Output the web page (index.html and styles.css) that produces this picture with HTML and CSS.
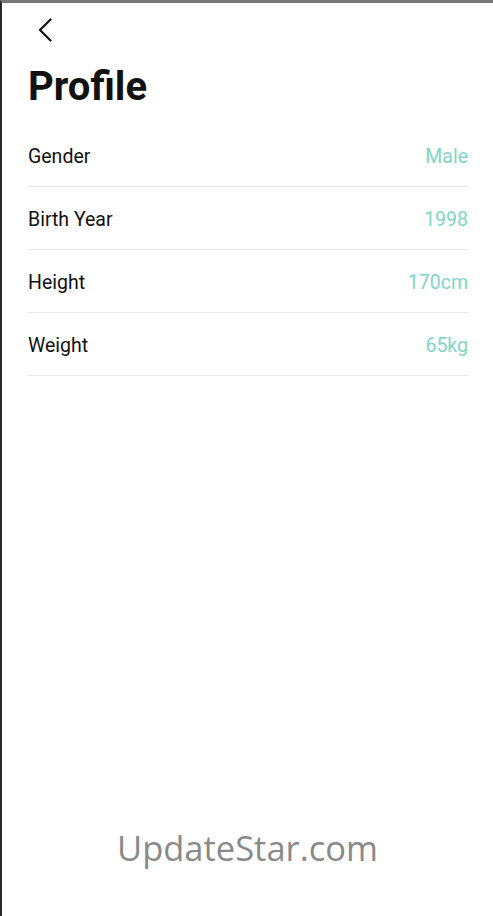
FILE: index.html
```html
<!DOCTYPE html>
<html lang="en">
<head>
    <meta charset="UTF-8">
    <meta name="viewport" content="width=device-width, initial-scale=1.0">
    <title>Profile</title>
    <link rel="stylesheet" href="styles.css">
</head>
<body>
    <div class="screen">
        <header class="top-bar">
            <button class="back-btn" aria-label="Back">
                <svg width="14" height="24" viewBox="0 0 14 24">
                    <path d="M12.5 1.5 L2 12 L12.5 22.5" fill="none" stroke="#111" stroke-width="2.2" stroke-linecap="round" stroke-linejoin="round"/>
                </svg>
            </button>
        </header>

        <h1 class="title">Profile</h1>

        <ul class="info-list">
            <li class="info-row">
                <span class="label">Gender</span>
                <span class="value">Male</span>
            </li>
            <li class="info-row">
                <span class="label">Birth Year</span>
                <span class="value">1998</span>
            </li>
            <li class="info-row">
                <span class="label">Height</span>
                <span class="value">170cm</span>
            </li>
            <li class="info-row">
                <span class="label">Weight</span>
                <span class="value">65kg</span>
            </li>
        </ul>

        <div class="watermark">UpdateStar.com</div>
    </div>
</body>
</html>
```

FILE: styles.css
```css
:root {
    --text-color: #111;
    --value-color: #80d6c5;
    --divider: #e8e8e8;
}

body {
    margin: 0;
    padding: 0;
    background-color: #fff;
    font-family: Roboto, 'Noto Sans', sans-serif;
    color: var(--text-color);
}

.screen {
    position: relative;
    height: 913px;
    border-top: 3px solid #777;
    border-left: 2px solid #2a2a2a;
    overflow: hidden;
}

.top-bar {
    height: 54px;
    display: flex;
    align-items: center;
    padding-left: 36px;
}

.back-btn {
    border: none;
    background: none;
    padding: 0;
    cursor: pointer;
    display: flex;
}

.title {
    margin: 0 0 7px;
    padding-left: 26px;
    font-size: 40px;
    font-weight: 700;
    line-height: 60px;
}

.info-list {
    list-style: none;
    margin: 0 25px 0 26px;
    padding: 0;
}

.info-row {
    display: flex;
    justify-content: space-between;
    align-items: center;
    height: 60px;
    padding-top: 2px;
    border-bottom: 1px solid var(--divider);
    font-size: 19.5px;
}

.value {
    color: var(--value-color);
}

.watermark {
    position: absolute;
    left: 0;
    right: 0;
    top: 821px;
    text-align: center;
    font-family: 'Open Sans', sans-serif;
    font-size: 34.5px;
    color: #8a8a8a;
}
```
